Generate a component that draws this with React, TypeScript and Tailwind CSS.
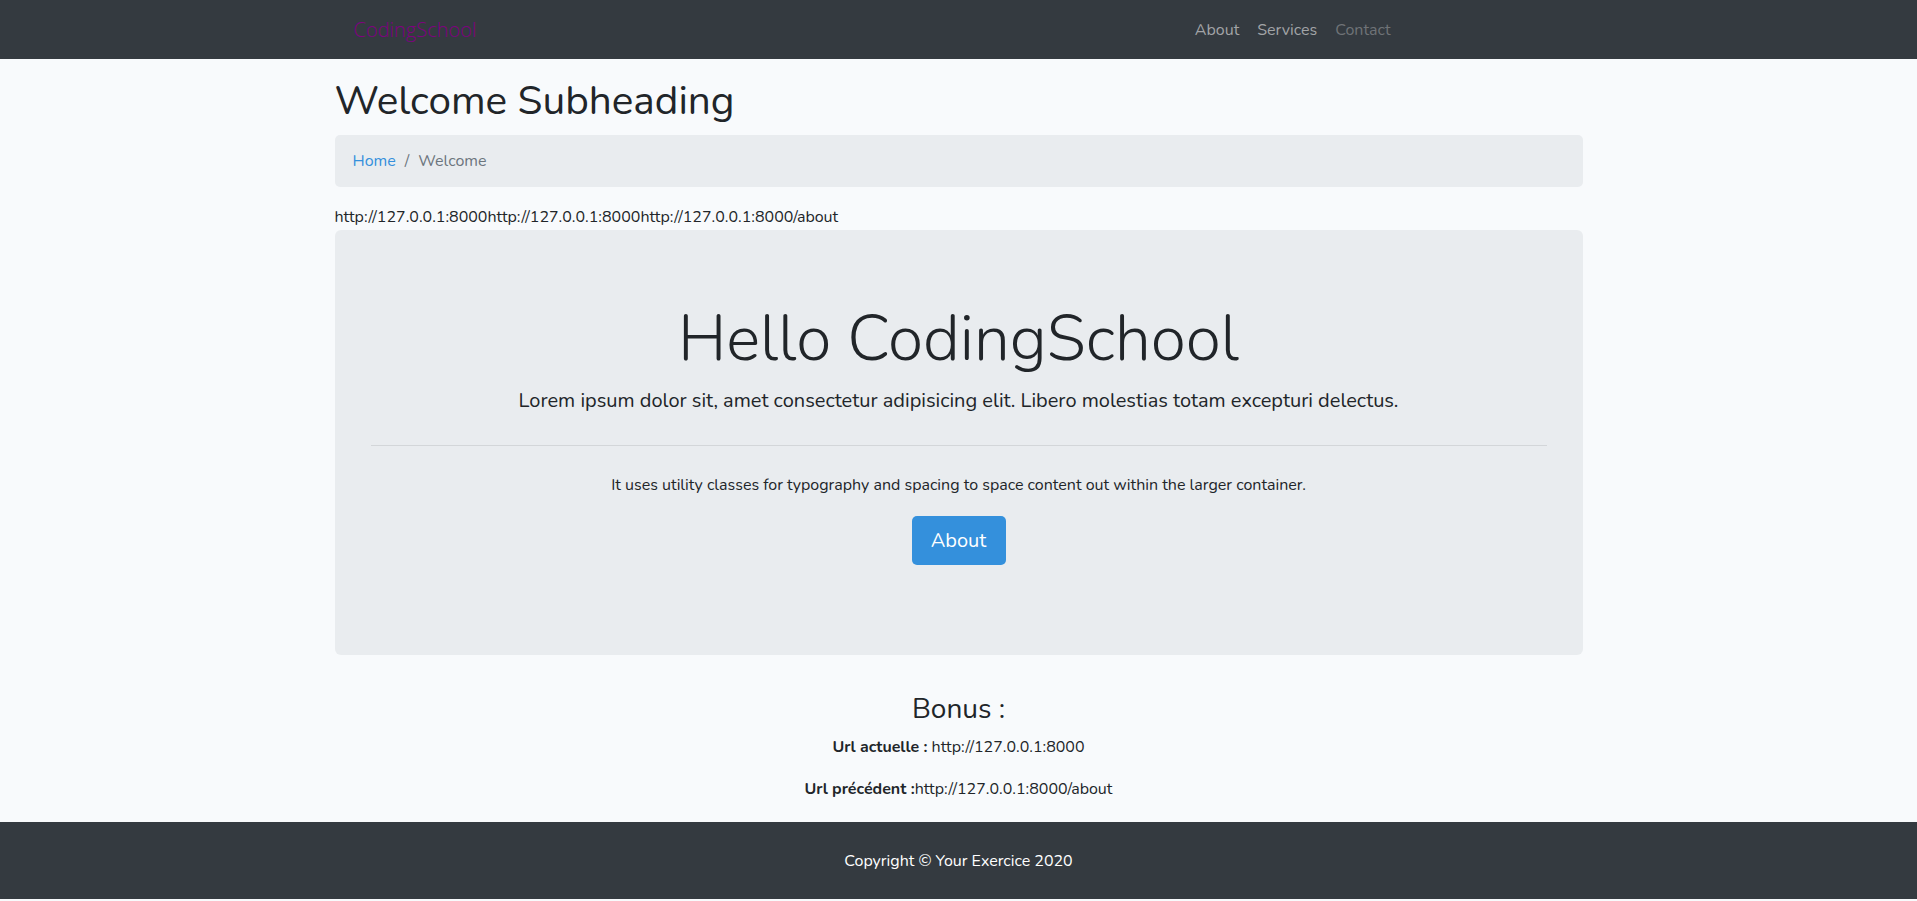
import React from 'react'

const NavBar = () => (
  <nav className="bg-[#343a40] h-[59px]">
    <div className="w-[1248px] mx-auto h-full flex items-center">
      <a className="ml-[19px] text-[20px] text-[#800080] font-light font-[family-name:'Open_Sans',sans-serif]">
        CodingSchool
      </a>
      <ul className="ml-auto mr-[183px] flex items-center text-[16px]">
        <li className="px-[9px] text-[#a2a4a7]">About</li>
        <li className="px-[9px] text-[#a2a4a7]">Services</li>
        <li className="px-[9px] text-[#6f7377]">Contact</li>
      </ul>
    </div>
  </nav>
)

export default function App() {
  return (
    <div className="min-h-[901px] bg-[#f8fafc] text-[#212529] flex flex-col font-[family-name:Nunito,'Noto_Sans',sans-serif]">
      <NavBar />
      <main className="w-[1248px] mx-auto">
        <h1 className="mt-[18px] text-[40.5px] leading-[48px] font-normal">Welcome Subheading</h1>
        <ol className="mt-[10px] h-[52px] px-[18px] rounded-[5px] bg-[#e9ecef] flex items-center text-[16px]">
          <li className="text-[#3490dc]">Home</li>
          <li className="px-[9px] text-[#6c757d]">/</li>
          <li className="text-[#6c757d]">Welcome</li>
        </ol>
        <p className="mt-[17px] text-[16px] leading-[26px]">
          http://127.0.0.1:8000http://127.0.0.1:8000http://127.0.0.1:8000/about
        </p>
        <section className="h-[425px] rounded-[6px] bg-[#e9ecef] px-[36px] flex flex-col items-center">
          <h2 className="mt-[71px] text-[64px] leading-[76px] font-light">Hello CodingSchool</h2>
          <p className="mt-[9px] text-[20px] leading-[30px] font-normal">
            Lorem ipsum dolor sit, amet consectetur adipisicing elit. Libero molestias totam excepturi delectus.
          </p>
          <hr className="mt-[29px] w-full border-0 border-t border-[#d3d6d9]" />
          <p className="mt-[26px] text-[16px] leading-[26px]">
            It uses utility classes for typography and spacing to space content out within the larger container.
          </p>
          <button className="mt-[18px] w-[94px] h-[49px] rounded-[5px] bg-[#3490dc] text-white text-[20px]">
            About
          </button>
        </section>
        <div className="flex flex-col items-center text-[16px]">
          <h3 className="mt-[37px] text-[28px] leading-[34px] font-normal">Bonus :</h3>
          <p className="mt-[8px] leading-[26px]">
            <b className="font-bold">Url actuelle :</b> http://127.0.0.1:8000
          </p>
          <p className="mt-[16px] leading-[26px]">
            <b className="font-bold">Url précédent :</b>http://127.0.0.1:8000/about
          </p>
        </div>
      </main>
      <footer className="mt-[20px] h-[77px] bg-[#343a40] flex items-center justify-center text-white text-[16px]">
        Copyright © Your Exercice 2020
      </footer>
    </div>
  )
}
